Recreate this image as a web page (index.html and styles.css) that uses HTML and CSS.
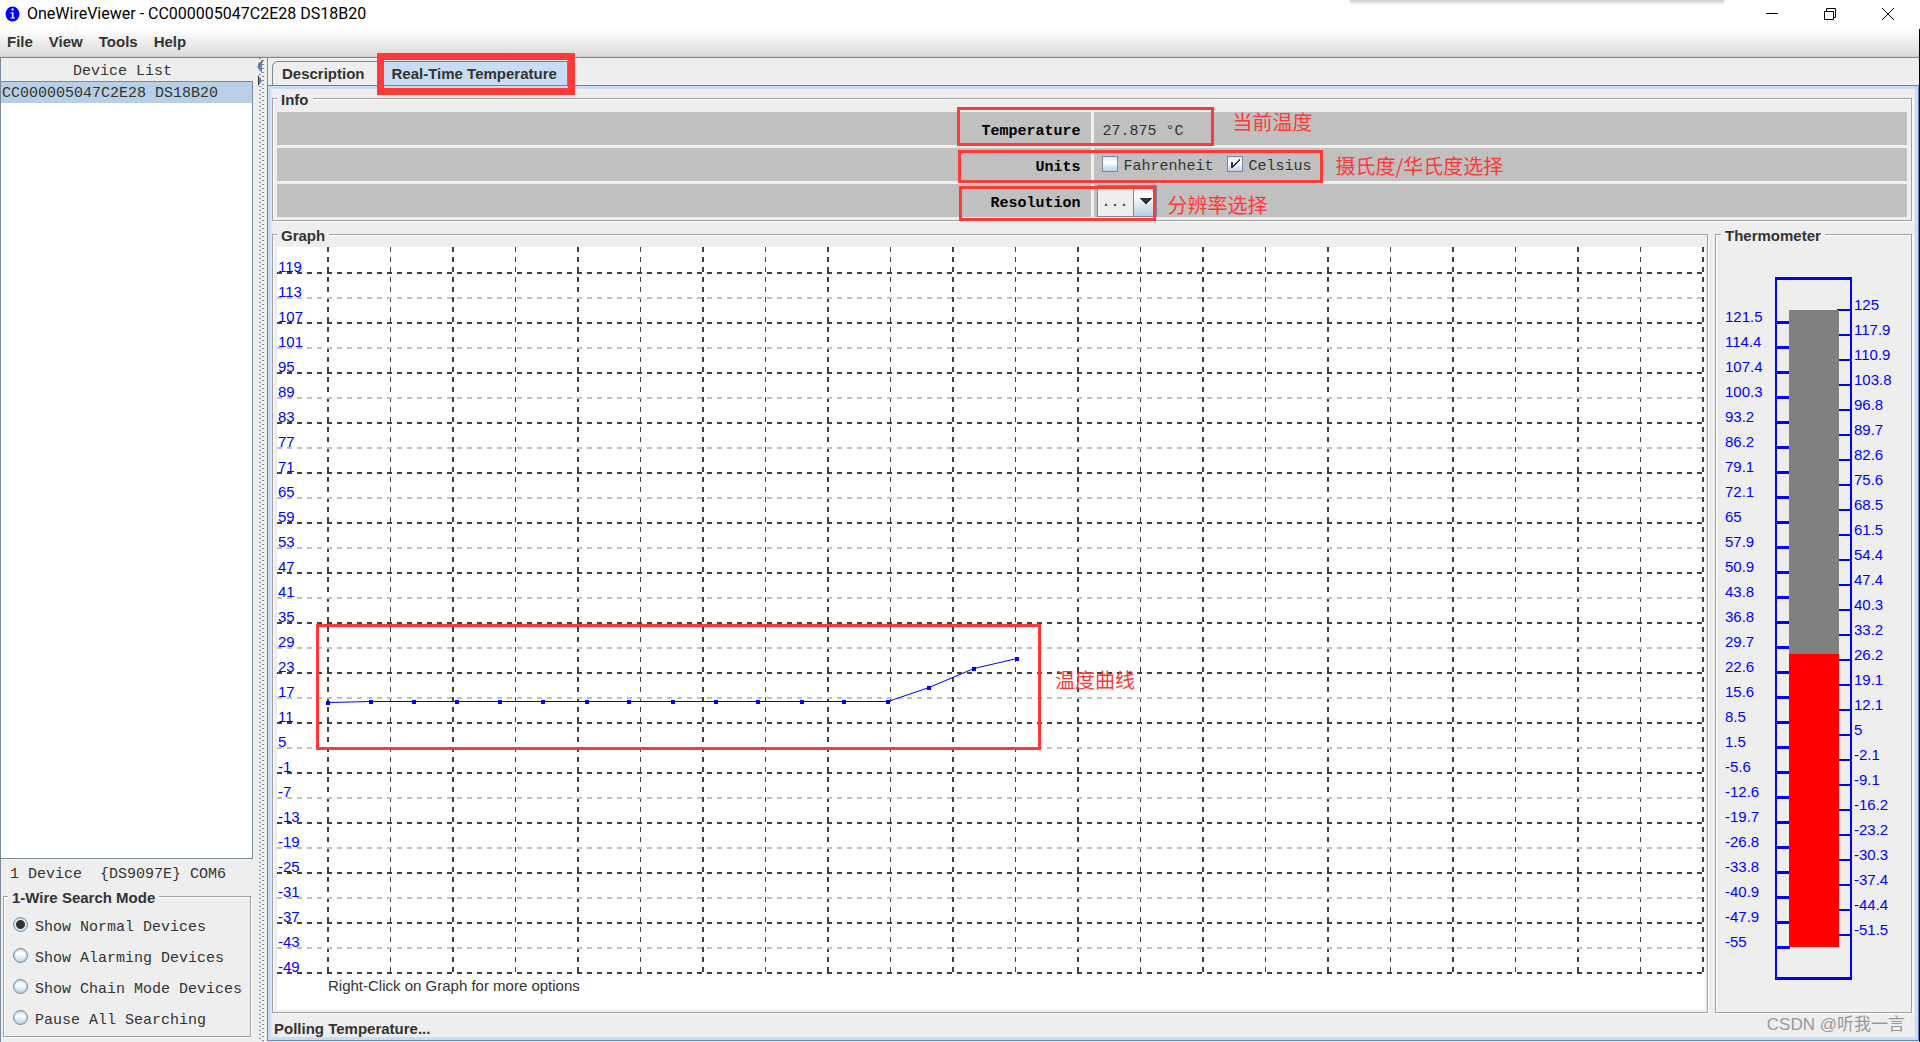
FILE: index.html
```html
<!DOCTYPE html>
<html lang="zh-CN">
<head>
<meta charset="utf-8">
<title>OneWireViewer - CC000005047C2E28 DS18B20</title>
<link rel="stylesheet" href="styles.css">
</head>
<body>
<header class="titlebar">
  <svg class="app-icon" width="15" height="16" viewBox="0 0 15 16" aria-hidden="true"><ellipse cx="7.500" cy="8" rx="7" ry="7.500" fill="#0000ff"/><path d="M6.500 2.500h2v2h-2zM5.500 6.500h3v5h1.500v1H5.500v-1h1.500v-4H5.500z" fill="#fff"/></svg>
  <h1 class="app-title">OneWireViewer - CC000005047C2E28 DS18B20</h1>
  <div class="top-shadow"></div>
  <div class="window-buttons">
    <button type="button" aria-label="Minimize"><svg width="14" height="14" viewBox="0 0 14 14"><path d="M1 6.500h12" stroke="#000" fill="none"/></svg></button>
    <button type="button" aria-label="Restore"><svg width="14" height="14" viewBox="0 0 14 14"><path d="M1.500 4.500h9v8h-9zM3.500 4.500v-3h9v9h-2" stroke="#000" fill="none"/></svg></button>
    <button type="button" aria-label="Close"><svg width="14" height="14" viewBox="0 0 14 14"><path d="M1 1l12 12M13 1L1 13" stroke="#000" fill="none"/></svg></button>
  </div>
</header>

<div class="frame">
  <nav class="menubar">
    <button type="button">File</button><button type="button">View</button><button type="button">Tools</button><button type="button">Help</button>
  </nav>

  <div class="workspace">
    <aside class="sidebar">
      <h2 class="list-heading">Device List</h2>
      <ul class="device-list">
        <li class="selected">CC000005047C2E28 DS18B20</li>
      </ul>
      <p class="adapter">1 Device&nbsp; {DS9097E} COM6</p>
      <section class="group search-mode">
        <h2 class="group-title">1-Wire Search Mode</h2>
        <label><input type="radio" name="mode" checked>Show Normal Devices</label>
        <label><input type="radio" name="mode">Show Alarming Devices</label>
        <label><input type="radio" name="mode">Show Chain Mode Devices</label>
        <label><input type="radio" name="mode">Pause All Searching</label>
      </section>
    </aside>

    <div class="splitter">
      <svg width="10" height="30" viewBox="0 0 10 30" aria-hidden="true"><path d="M0 9l5-6v12z" fill="#6382bf"/><path d="M5 2v3M2 5v3" stroke="#333" fill="none"/><path d="M1 17v11l4-5z" fill="#6382bf"/><path d="M1.500 18v9" stroke="#333" fill="none"/></svg>
    </div>

    <main class="viewer">
      <div class="tabs" role="tablist">
        <button type="button" class="tab" role="tab">Description</button>
        <button type="button" class="tab active" role="tab" aria-selected="true">Real-Time Temperature<span class="mark mark-tab"></span></button>
      </div>

      <div class="panel">
        <section class="group info">
          <h2 class="group-title">Info</h2>
          <div class="info-grid">
            <div class="name">Temperature</div>
            <div class="value">27.875 °C<span class="mark mark-temp"></span><span class="note note-temp">当前温度</span></div>
            <div class="name">Units</div>
            <div class="value units">
              <label><input type="checkbox">Fahrenheit</label>
              <label><input type="checkbox" checked>Celsius</label>
              <span class="mark mark-units"></span><span class="note note-units">摄氏度/华氏度选择</span>
            </div>
            <label class="name" for="resolution">Resolution</label>
            <div class="value resolution">
              <select id="resolution"><option>...</option></select>
              <span class="mark mark-res"></span><span class="note note-res">分辨率选择</span>
            </div>
          </div>
        </section>

        <div class="charts">
          <section class="group graph">
            <h2 class="group-title">Graph</h2>
            <div class="plot">
              <svg id="plot" viewBox="0 0 1428 763"></svg>
              <span class="mark mark-curve"></span><span class="note note-curve">温度曲线</span>
            </div>
          </section>
          <section class="group thermo">
            <h2 class="group-title">Thermometer</h2>
            <svg id="thermo" viewBox="0 0 193 763"></svg>
          </section>
        </div>

        <footer class="statusbar">Polling Temperature...<span class="watermark">CSDN @听我一言</span></footer>
      </div>
    </main>
  </div>
</div>
<script src="charts.js"></script>
</body>
</html>
```
FILE: styles.css
```css
* { box-sizing: border-box; }

body {
  margin: 0;
  height: 100vh;
  display: flex;
  flex-direction: column;
  background: #eee;
  color: #333;
  font: bold 15px/18px "Liberation Sans", Arial, sans-serif;
}
h1, h2, p, ul { margin: 0; padding: 0; font-size: 15px; }
button { border: 0; padding: 0; background: none; color: inherit; font: inherit; }

.titlebar {
  position: relative;
  flex: none;
  height: 29px;
  display: flex;
  align-items: center;
  padding: 0 18px 1px 5px;
  background: #fff;
}
.app-icon { margin-right: 7px; }
.app-title { font: 16px/20px Roboto, sans-serif; color: #000; }
.window-buttons { margin-left: auto; display: flex; gap: 44px; padding-right: 7px; }
.window-buttons button { width: 14px; height: 14px; }
.window-buttons svg { display: block; }
.top-shadow {
  position: absolute;
  top: 0;
  right: 196px;
  width: 374px;
  height: 2px;
  background: #d6d6d6;
  box-shadow: 0 1px 3px #ccc;
}

.frame {
  flex: 1;
  min-height: 0;
  display: flex;
  flex-direction: column;
  border-right: 1px solid #000;
}
.menubar {
  flex: none;
  height: 28px;
  display: flex;
  gap: 16px;
  padding: 0 7px 2px;
  background: linear-gradient(#fff, #dadada);
  border-bottom: 1px solid #ccc;
}
.workspace { flex: 1; min-height: 0; display: flex; border-top: 1px solid #7a8a99; }

.sidebar {
  flex: none;
  width: 257px;
  display: flex;
  flex-direction: column;
  padding-bottom: 5px;
  border-left: 1px solid #7a8a99;
  font: 15px/20px "Liberation Mono", "Courier New", monospace;
}
.list-heading { font: inherit; text-align: center; height: 23px; padding: 4px 13px 0 0; }
.device-list {
  flex: 1;
  margin-right: 4px;
  background: #fff;
  border: 1px solid #7a8a99;
  border-left: 0;
  list-style: none;
}
.device-list .selected { height: 21px; padding: 2px 0 0 1px; background: #b8cfe5; }
.adapter { padding: 6px 9px 11px; }

.group {
  display: flex;
  flex-direction: column;
  border: 1px solid #a0a0a0;
  box-shadow: 1px 1px 0 #fff, inset 1px 1px 0 #fff;
}
.group-title {
  align-self: flex-start;
  margin: -8px 0 0 4px;
  padding: 0 4px;
  background: #eee;
  font: bold 15px/18px "Liberation Sans", Arial, sans-serif;
}
.info .group-title, .graph .group-title { margin-left: 0; }

.search-mode { margin: 0 6px 0 2px; }
.search-mode label { display: flex; align-items: center; height: 31px; padding-left: 9px; }
.search-mode .group-title + label { margin-top: 5px; }
input { appearance: none; margin: 0; }
input[type="radio"] {
  width: 15px;
  height: 15px;
  margin: 0 7px 6px 0;
  border: 1px solid #7a8a99;
  border-radius: 50%;
  background: linear-gradient(#dde8f3, #fff 40%, #b8cfe5);
  box-shadow: inset 0 0 0 1px #b8cfe5;
}
input[type="radio"]:checked { background: radial-gradient(circle, #333 4px, #eef3f9 5px); }

.splitter {
  flex: none;
  width: 10px;
  background:
    repeating-linear-gradient(#7a8a99 0 1px, #eee 1px 4px) 2px 0 / 2px 100% no-repeat,
    repeating-linear-gradient(#eee 0 2px, #7a8a99 2px 3px, #eee 3px 4px) 5px 0 / 2px 100% no-repeat,
    #eee;
}
.splitter svg { display: block; }

.viewer { flex: 1; min-width: 0; display: flex; flex-direction: column; }
.tabs { flex: none; display: flex; height: 27px; padding: 3px 0 0 4px; border-left: 1px solid #7a8a99; }
.tab {
  position: relative;
  padding: 0 12px 0 9px;
  border: 1px solid #7a8a99;
  border-bottom: 0;
  border-top-left-radius: 6px;
}
.tab.active { padding: 0 10px 0 13px; border-color: #6382bf; background: #c8ddf2; }

.panel {
  flex: 1;
  min-height: 0;
  display: flex;
  flex-direction: column;
  margin-bottom: 1px;
  border: 1px solid #6382bf;
  box-shadow: inset 0 0 0 3px #c8ddf2;
  padding: 12px 6px 3px 4px;
}
.info { padding: 0 4px 3px; }
.info-grid {
  display: grid;
  grid-template-columns: 1fr 1fr;
  grid-auto-rows: 33px;
  gap: 3px;
  margin-top: 3px;
  font: 15px/20px "Liberation Mono", "Courier New", monospace;
}
.name, .value { display: flex; align-items: center; background: #c0c0c0; padding: 6px 10px 0 9px; }
.name { justify-content: flex-end; font-weight: bold; color: #000; }
.value { position: relative; }
.units { gap: 13px; padding: 4px 8px 0; }
.units label { display: flex; align-items: center; }
input[type="checkbox"] {
  width: 16px;
  height: 16px;
  margin: 0 6px 5px 0;
  border: 1px solid #7a8a99;
  background: linear-gradient(#dde8f3, #fff 40%, #b8cfe5);
}
input[type="checkbox"]:checked {
  background:
    linear-gradient(#333, #333) 3px 5px / 2px 6px no-repeat,
    linear-gradient(135deg, transparent 45%, #333 46%, #333 56%, transparent 57%) 4px 2px / 8px 9px no-repeat,
    linear-gradient(#dde8f3, #fff 40%, #b8cfe5);
}
.value.resolution { padding: 0 3px; }
select {
  appearance: none;
  width: 60px;
  height: 32px;
  padding: 4px 0 0 4px;
  border: 1px solid #7a8a99;
  border-radius: 0;
  color: #333;
  font: inherit;
  background:
    conic-gradient(from -50deg at 50% 100%, #333 100deg, transparent 0) 42px 12px / 12px 6px no-repeat,
    linear-gradient(#7a8a99, #7a8a99) 35px 0 / 1px 100% no-repeat,
    linear-gradient(#dde8f3, #fff 30%, #b8cfe5) 36px 0 / 24px 100% no-repeat,
    #eee;
}

.charts { flex: 1; min-height: 0; display: flex; gap: 7px; margin-top: 13px; }
.graph { flex: 1; padding: 0 2px 2px 4px; }
.thermo { flex: none; width: 197px; padding: 0 1px; }
.plot { position: relative; flex: 1; min-height: 0; margin-top: 2px; background: #fff; }
.plot svg, .thermo svg { display: block; width: 100%; }
.thermo svg { margin-top: 2px; }
svg text { font: 15px "Liberation Sans", Arial, sans-serif; }

.statusbar { position: relative; flex: none; height: 24px; padding: 7px 2px 0; }
.watermark {
  position: absolute;
  right: 7px;
  top: 1px;
  color: #999;
  font: 17px/22px "Liberation Sans", "Noto Sans CJK SC", sans-serif;
}

/* Red callouts laid over the window */
.mark { position: absolute; border: 3px solid #ff3838; pointer-events: none; z-index: 1; }
.note {
  position: absolute;
  color: #ff3838;
  white-space: nowrap;
  font: 20px/24px "Noto Sans CJK SC", sans-serif;
}
.mark-tab { border-width: 7px; inset: -9px -8px -10px -2px; }
.mark-temp { left: -137px; top: -5px; width: 257px; height: 39px; }
.note-temp { left: 139px; top: -2px; }
.mark-units { left: -136px; top: 2px; width: 365px; height: 33px; }
.note-units { left: 242px; top: 6px; }
.mark-res { left: -135px; top: 2px; width: 197px; height: 35px; }
.note-res { left: 74px; top: 9px; }
.mark-curve { left: 39px; top: 377px; width: 725px; height: 126px; }
.note-curve { left: 778px; top: 421px; }
```
FILE: charts.js
```js
const NS = "http://www.w3.org/2000/svg";

function add(svg, tag, attrs, text) {
  const el = document.createElementNS(NS, tag);
  for (const key in attrs) el.setAttribute(key, attrs[key]);
  if (text !== undefined) el.textContent = text;
  svg.appendChild(el);
}

// Temperature history: grid, axis labels and curve
const plot = document.getElementById("plot");
for (let i = 0; i < 23; i++) {
  const thick = i % 2 === 0;
  const x = thick ? 51 + i * 62.5 : Math.floor(51 + i * 62.5) + 0.5;
  add(plot, "line", {
    x1: x, x2: x, y1: 0, y2: 727,
    stroke: "#404040", "stroke-width": thick ? 2 : 1, "stroke-dasharray": "5 5"
  });
}
for (let i = 0; i < 29; i++) {
  const y = 26 + i * 25;
  add(plot, "line", {
    x1: 0, x2: 1426, y1: y, y2: y,
    stroke: i % 2 ? "#c0c0c0" : "#404040", "stroke-width": 2, "stroke-dasharray": "5 5"
  });
  add(plot, "text", { x: 1, y: y - 1, fill: "#0000ff" }, 119 - 6 * i);
}
const points = [[51, 456], [94, 455], [137, 455], [180, 455], [223, 455], [266, 455], [310, 455], [352, 455],
  [396, 455], [439, 455], [481, 455], [525, 455], [567, 455], [611, 455], [652, 441], [697, 422], [740, 412]];
add(plot, "polyline", {
  points: points.map(([x, y]) => `${x},${y - 0.5}`).join(" "),
  fill: "none", stroke: "#0000ff", "stroke-width": 1
});
for (const [x, y] of points) add(plot, "rect", { x: x - 2, y: y - 2, width: 4, height: 4, fill: "#0000ff" });
add(plot, "text", { x: 51, y: 744, fill: "#333" }, "Right-Click on Graph for more options");

// Thermometer: frame, ticks every half step on alternating sides, column
const thermo = document.getElementById("thermo");
add(thermo, "path", { d: "M58 30h77v703H58zM60 33v697h73V33z", fill: "#0000ff", "fill-rule": "evenodd" });
const left = [121.5, 114.4, 107.4, 100.3, 93.2, 86.2, 79.1, 72.1, 65, 57.9, 50.9, 43.8, 36.8, 29.7, 22.6, 15.6, 8.5, 1.5,
  -5.6, -12.6, -19.7, -26.8, -33.8, -40.9, -47.9, -55];
const right = [125, 117.9, 110.9, 103.8, 96.8, 89.7, 82.6, 75.6, 68.5, 61.5, 54.4, 47.4, 40.3, 33.2, 26.2, 19.1, 12.1, 5,
  -2.1, -9.1, -16.2, -23.2, -30.3, -37.4, -44.4, -51.5];
left.forEach((value, i) => {
  add(thermo, "rect", { x: 60, y: 74 + i * 25, width: 13, height: 3, fill: "#0000ff" });
  add(thermo, "text", { x: 8, y: 75 + i * 25, fill: "#0000ff" }, value);
});
right.forEach((value, i) => {
  add(thermo, "rect", { x: 120, y: 62 + i * 25, width: 14, height: 2, fill: "#0000ff" });
  add(thermo, "text", { x: 137, y: 63 + i * 25, fill: "#0000ff" }, value);
});
add(thermo, "rect", { x: 72, y: 63, width: 50, height: 344, fill: "#808080" });
add(thermo, "rect", { x: 72, y: 407, width: 50, height: 293, fill: "#ff0000" });
```
